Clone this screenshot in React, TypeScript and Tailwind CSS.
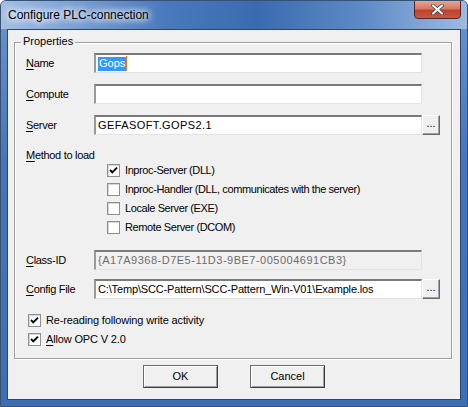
import React from "react";

const ui = "font-['Liberation_Sans',Arial,sans-serif] text-[11px] leading-none text-black";

function Check({ on }: { on?: boolean }) {
  return (
    <span className="relative inline-block w-[13px] h-[13px] shrink-0 bg-white border border-[#8e8f8f] shadow-[inset_1px_1px_0_#d6d6d6]">
      {on && (
        <svg width="11" height="11" viewBox="0 0 11 11" className="absolute left-0 top-0">
          <path d="M2 5 L4.3 7.4 L9 2.6" fill="none" stroke="#000" strokeWidth="1.9" />
        </svg>
      )}
    </span>
  );
}

function U({ c }: { c: string }) {
  return <span className="underline underline-offset-2">{c}</span>;
}

function Field({ value, disabled, track, children }: { value?: string; disabled?: boolean; track?: string; children?: React.ReactNode }) {
  return (
    <div
      className={`w-[328px] h-[20px] flex items-center pl-[2px] border-t-2 border-l-2 border-t-[#7a7a7a] border-l-[#9a9a9a] border-b border-r border-b-[#e3e3e3] border-r-[#e3e3e3] ${
        disabled ? "bg-[#f0f0f0] text-[#6d6d6d]" : "bg-white"
      }`}
    >
      {children ?? <span className={`whitespace-nowrap ${track ?? ""}`}>{value}</span>}
    </div>
  );
}

function Dots() {
  return (
    <button className="w-[18px] h-[20px] bg-[#f0f0f0] border border-t-white border-l-white border-b-[#696969] border-r-[#696969] shadow-[inset_-1px_-1px_0_#a0a0a0] flex items-end justify-center pb-[5px] text-[11px] leading-none">
      ...
    </button>
  );
}

function Row({ label, mt, children }: { label: React.ReactNode; mt: string; children: React.ReactNode }) {
  return (
    <div className={`flex items-center h-[20px] ${mt}`}>
      <div className="w-[79px] pl-[11px] tracking-[-0.3px]">{label}</div>
      {children}
    </div>
  );
}

function Opt({ on, text }: { on?: boolean; text: string }) {
  return (
    <div className="flex items-center h-[19px] pl-[92px] gap-[5px]">
      <Check on={on} />
      <span className="whitespace-nowrap tracking-[-0.4px]">{text}</span>
    </div>
  );
}

function Btn({ children }: { children: React.ReactNode }) {
  return (
    <button className="w-[75px] h-[23px] bg-[#f0f0f0] border border-[#6a6a6a] border-b-[#3c3c3c] border-r-[#3c3c3c] shadow-[inset_1px_1px_0_#fff,inset_-1px_-1px_0_#a0a0a0] text-[11px] leading-none">
      {children}
    </button>
  );
}

export default function App() {
  return (
    <div className="w-[468px] h-[407px] bg-white">
      <div className="w-[468px] h-[407px] flex flex-col rounded-t-[6px] border border-[#39506e] bg-[linear-gradient(180deg,#6a95cf_0%,#4475bb_40%,#3d6fb6_100%)] px-[6px] pb-[6px] overflow-hidden">
        <div className="relative h-[28px] shrink-0 -mx-[6px] bg-[linear-gradient(90deg,#a3bfe4_0%,#7fa3d6_14%,#4a7abd_35%,#3a6bb0_55%,#5e8bc7_78%,#9dbbe0_100%)]">
          <span className="absolute left-[7px] top-[8px] font-['Liberation_Sans',Arial,sans-serif] text-[12px] leading-none text-black [text-shadow:0_0_6px_#fff,0_0_8px_#fff,0_0_10px_#fff]">
            Configure PLC-connection
          </span>
          <div className="absolute right-[6px] top-[-1px] w-[47px] h-[19px] rounded-b-[4px] border border-[#5a2220] bg-[linear-gradient(180deg,#e8a493_0%,#d47a66_45%,#c0412c_55%,#c65a40_100%)] flex items-center justify-center">
            <svg width="13" height="11" viewBox="0 0 13 11">
              <path d="M2 1.5 L11 9.5 M11 1.5 L2 9.5" stroke="#3a3a3a" strokeWidth="3.6" strokeLinecap="round" />
              <path d="M2 1.5 L11 9.5 M11 1.5 L2 9.5" stroke="#fff" strokeWidth="2.2" strokeLinecap="round" />
            </svg>
          </div>
        </div>
        <div className={`flex-1 border border-[#2f4668] bg-[#f0f0f0] ${ui}`}>
          <div className="relative mt-[12px] ml-[6px] w-[438px] h-[317px] border border-[#a0a0a0] shadow-[inset_1px_1px_0_#fff,1px_1px_0_#fff]">
            <span className="absolute left-[6px] top-[-7px] bg-[#f0f0f0] px-[2px]">Properties</span>
            <div className="pt-[10px]">
              <Row label={<><U c="N" />ame</>} mt="mt-0">
                <Field>
                  <span className="bg-[#3399ff] text-white px-[1px] h-[14px] flex items-center">Gops</span>
                  <span className="w-[1px] h-[15px] bg-[#e07a1f]" />
                </Field>
              </Row>
              <Row label={<><U c="C" />ompute</>} mt="mt-[11px]">
                <Field value="" />
              </Row>
              <Row label={<><U c="S" />erver</>} mt="mt-[11px]">
                <Field value="GEFASOFT.GOPS2.1" track="tracking-[0.4px]" />
                <Dots />
              </Row>
              <div className="h-[12px] mt-[14px] pl-[11px] flex items-center tracking-[-0.3px]">
                <span><U c="M" />ethod to load</span>
              </div>
              <Opt on text="Inproc-Server (DLL)" />
              <Opt text="Inproc-Handler (DLL, communicates with the server)" />
              <Opt text="Locale Server (EXE)" />
              <Opt text="Remote Server (DCOM)" />
              <Row label={<><U c="C" />lass-ID</>} mt="mt-[13px]">
                <Field disabled value="{A17A9368-D7E5-11D3-9BE7-005004691CB3}" track="tracking-[0.5px]" />
              </Row>
              <Row label={<><U c="C" />onfig File</>} mt="mt-[9px]">
                <Field value="C:\Temp\SCC-Pattern\SCC-Pattern_Win-V01\Example.los" track="tracking-[-0.15px]" />
                <Dots />
              </Row>
              <div className="flex items-center h-[18px] mt-[12px] pl-[13px] gap-[5px] tracking-[-0.15px]">
                <Check on />
                <span>Re-reading following write activity</span>
              </div>
              <div className="flex items-center h-[18px] mt-[1px] pl-[13px] gap-[5px] tracking-[-0.15px]">
                <Check on />
                <span><U c="A" />llow OPC V 2.0</span>
              </div>
            </div>
          </div>
          <div className="flex justify-center gap-[32px] mt-[6px]">
            <Btn>OK</Btn>
            <Btn>Cancel</Btn>
          </div>
        </div>
      </div>
    </div>
  );
}
